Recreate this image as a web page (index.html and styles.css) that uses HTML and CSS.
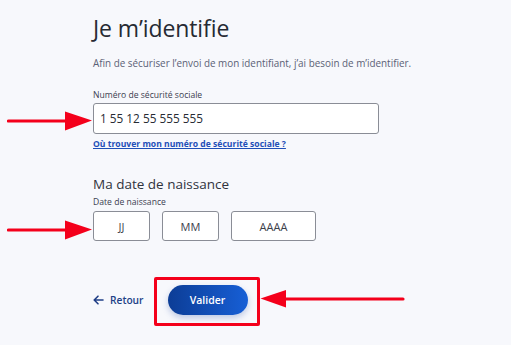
FILE: index.html
```html
<!DOCTYPE html>
<html lang="fr">
<head>
<meta charset="utf-8">
<title>Je m'identifie</title>
<link rel="stylesheet" href="styles.css">
</head>
<body>
<main class="page">
  <h1 class="title">Je m’identifie</h1>
  <p class="intro">Afin de sécuriser l’envoi de mon identifiant, j’ai besoin de m’identifier.</p>

  <label class="label">Numéro de sécurité sociale</label>
  <div class="input nir">1 55 12 55 555 555</div>
  <a class="help" href="#">Où trouver mon numéro de sécurité sociale ?</a>

  <h2 class="subtitle">Ma date de naissance</h2>
  <label class="label">Date de naissance</label>
  <div class="dates">
    <div class="input date day">JJ</div>
    <div class="input date month">MM</div>
    <div class="input date year">AAAA</div>
  </div>

  <div class="actions">
    <a class="back" href="#">
      <svg width="11" height="10" viewBox="0 0 11 10" aria-hidden="true"><path d="M10 5H1.5M5 1.2L1.2 5L5 8.8" fill="none" stroke="#213f86" stroke-width="1.6" stroke-linecap="round" stroke-linejoin="round"/></svg>
      <span>Retour</span>
    </a>
    <button class="submit">Valider</button>
  </div>
</main>

<div class="mark box"></div>
<svg class="mark arrow a1" width="86" height="20" viewBox="0 0 86 20" aria-hidden="true"><path d="M1.5 10H62" stroke="#f4001b" stroke-width="3.2" stroke-linecap="round"/><path d="M58 0.5L85 9.5L58 19.5Z" fill="#f4001b"/></svg>
<svg class="mark arrow a2" width="86" height="20" viewBox="0 0 86 20" aria-hidden="true"><path d="M1.5 10H62" stroke="#f4001b" stroke-width="3.2" stroke-linecap="round"/><path d="M58 0.5L85 9.5L58 19.5Z" fill="#f4001b"/></svg>
<svg class="mark arrow a3" width="146" height="20" viewBox="0 0 146 20" aria-hidden="true"><path d="M20 10H143" stroke="#f4001b" stroke-width="3.2" stroke-linecap="round"/><path d="M26 1L0.5 9.5L26 18.5Z" fill="#f4001b"/></svg>
</body>
</html>
```
FILE: styles.css
```css
html, body {
  margin: 0;
  padding: 0;
  background: #f7f8fc;
  font-family: "Open Sans", "Noto Sans", sans-serif;
  color: #23262f;
}
body {
  position: relative;
  width: 511px;
  height: 345px;
  overflow: hidden;
}
.page {
  padding: 14px 0 0 93px;
  display: flex;
  flex-direction: column;
  align-items: flex-start;
}
.title {
  margin: 0;
  font-size: 23px;
  line-height: 28px;
  font-weight: 400;
  color: #262a33;
  letter-spacing: -0.1px;
}
.intro {
  margin: 14px 0 0;
  font-size: 9.9px;
  line-height: 14px;
  color: #5b6176;
}
.label {
  display: block;
  margin-top: 19px;
  font-size: 8.6px;
  line-height: 12px;
  color: #3b4050;
}
.subtitle + .label { margin-top: 3px; }
.input {
  box-sizing: border-box;
  background: #fff;
  border: 1px solid #8a8d96;
  border-radius: 3px;
  color: #262a33;
}
.nir {
  margin-top: 2px;
  width: 286px;
  height: 31px;
  padding-left: 6px;
  font-size: 11.8px;
  line-height: 29px;
}
.help {
  margin-top: 4px;
  font-size: 8.6px;
  line-height: 12px;
  font-weight: 700;
  color: #1f4fb8;
  text-decoration: underline;
}
.subtitle {
  margin: 25px 0 0;
  font-size: 13.5px;
  line-height: 18px;
  font-weight: 500;
  color: #30333c;
}
.dates {
  margin-top: 3px;
  display: flex;
  gap: 12px;
}
.date {
  height: 30px;
  display: flex;
  align-items: center;
  justify-content: center;
  font-size: 11px;
  color: #3c404b;
}
.day, .month { width: 57px; }
.year { width: 85px; }
.actions {
  margin-top: 44px;
  display: flex;
  align-items: center;
}
.back {
  display: flex;
  align-items: center;
  gap: 6px;
  font-size: 10.2px;
  font-weight: 600;
  color: #213f86;
  text-decoration: none;
}
.submit {
  margin-left: 24px;
  width: 80px;
  height: 30px;
  border: 0;
  border-radius: 15px;
  background: linear-gradient(90deg, #0c3d96 0%, #175fd6 100%);
  box-shadow: 0 3px 6px rgba(40, 80, 170, 0.28);
  color: #fff;
  font-family: "Open Sans", "Noto Sans", sans-serif;
  font-size: 10.5px;
  font-weight: 600;
}
.mark { position: absolute; }
.box {
  left: 154px;
  top: 277px;
  width: 100px;
  height: 43px;
  border: 3px solid #f4001b;
  border-radius: 2px;
}
.a1 { left: 7px; top: 111px; }
.a2 { left: 7px; top: 220px; }
.a3 { left: 260px; top: 289px; }
```
